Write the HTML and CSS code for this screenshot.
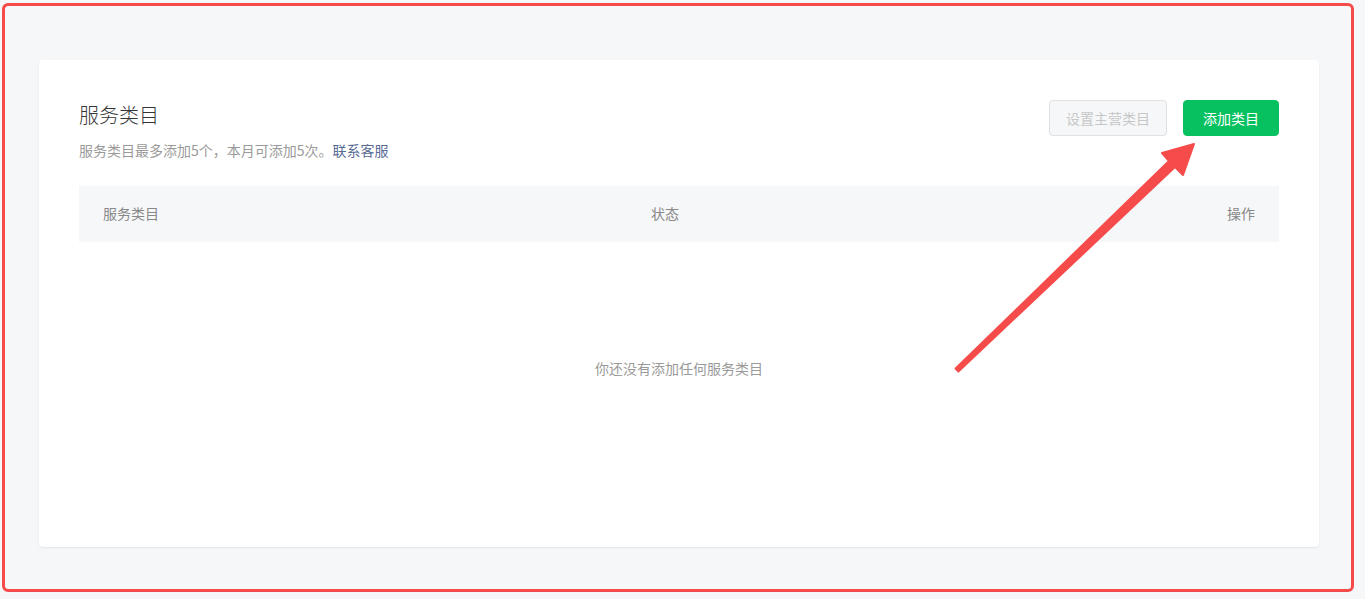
FILE: index.html
```html
<!DOCTYPE html>
<html lang="zh">
<head>
<meta charset="utf-8">
<link rel="stylesheet" href="styles.css">
</head>
<body>
<div class="frame">
  <div class="card">
    <div class="head">
      <div class="head-text">
        <h1 class="title">服务类目</h1>
        <p class="sub">服务类目最多添加5个，本月可添加5次。<a class="link">联系客服</a></p>
      </div>
      <div class="actions">
        <button class="btn btn-disabled">设置主营类目</button>
        <button class="btn btn-primary">添加类目</button>
      </div>
    </div>
    <div class="table-head">
      <span class="col col-a">服务类目</span>
      <span class="col col-b">状态</span>
      <span class="col col-c">操作</span>
    </div>
    <div class="empty">你还没有添加任何服务类目</div>
  </div>
</div>
<svg class="arrow" width="1365" height="599" viewBox="0 0 1365 599">
  <polygon points="955.6,368.5 1169,161 1162,153 1194,144 1183,175 1175,167 958.4,371.5" fill="#f54b4a" stroke="#f54b4a" stroke-width="2" stroke-linejoin="round"/>
</svg>
</body>
</html>
```
FILE: styles.css
```css
html, body {
  margin: 0;
  padding: 0;
  background: #f6f7f9;
  font-family: "Noto Sans CJK SC", "Noto Sans", sans-serif;
}
.frame {
  box-sizing: border-box;
  margin: 3px 0 0 2px;
  width: 1352px;
  height: 589px;
  border: 3px solid #f54b4a;
  border-radius: 6px;
  padding: 54px 32px 0 34px;
}
.card {
  box-sizing: border-box;
  height: 487px;
  background: #fff;
  border-radius: 4px;
  box-shadow: 0 1px 2px rgba(0,0,0,0.08);
  padding: 40px 40px 0 40px;
}
.head {
  display: flex;
  justify-content: space-between;
  align-items: flex-start;
}
.title {
  margin: 1px 0 0;
  font-size: 20px;
  line-height: 28px;
  font-weight: 300;
  color: #353535;
}
.sub {
  margin: 11px 0 0;
  font-size: 14px;
  line-height: 20px;
  color: #9a9a9a;
}
.link {
  color: #576b95;
}
.actions {
  display: flex;
  gap: 16px;
}
.btn {
  box-sizing: border-box;
  height: 36px;
  padding: 0 16px;
  border-radius: 4px;
  font-family: inherit;
  font-size: 14px;
  line-height: 34px;
}
.btn-disabled {
  width: 118px;
  background: #f6f7f9;
  border: 1px solid #e0e1e3;
  color: #c7c7c7;
}
.btn-primary {
  width: 96px;
  background: #07c160;
  border: 1px solid #07c160;
  color: #fff;
}
.table-head {
  box-sizing: border-box;
  margin-top: 26px;
  height: 56px;
  background: #f6f7f9;
  display: grid;
  grid-template-columns: 548px 1fr 1fr;
  align-items: center;
  padding: 0 24px 2px;
  font-size: 14px;
  color: #888;
}
.col-c { text-align: right; }
.empty {
  height: 252px;
  display: flex;
  align-items: center;
  justify-content: center;
  font-size: 14px;
  color: #9a9a9a;
}
.arrow {
  position: absolute;
  left: 0;
  top: 0;
  pointer-events: none;
}
```
